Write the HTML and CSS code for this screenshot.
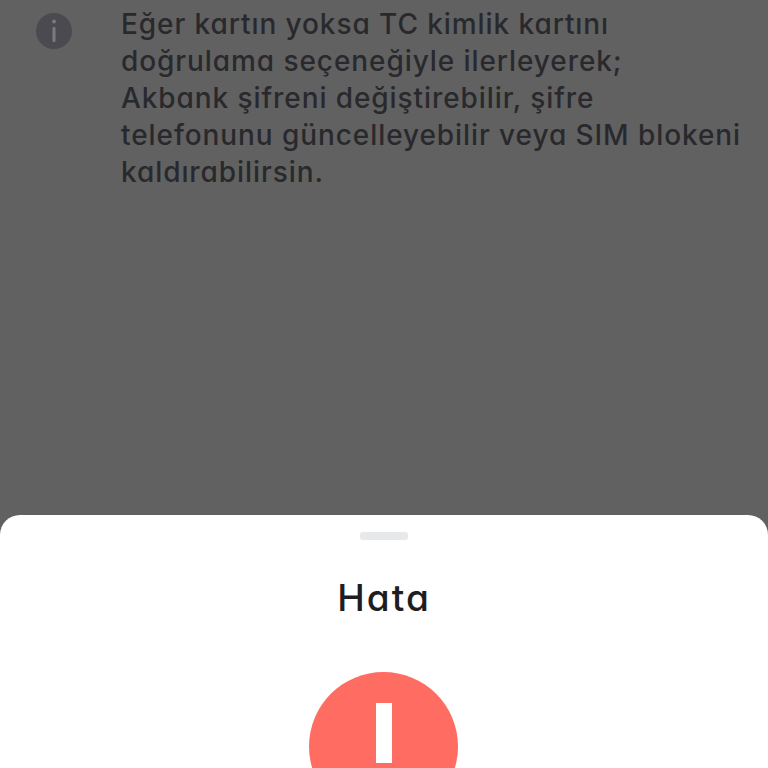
FILE: index.html
```html
<!DOCTYPE html>
<html lang="tr">
<head>
<meta charset="utf-8">
<title>Hata</title>
<link rel="stylesheet" href="styles.css">
</head>
<body>
<div class="screen">
  <main class="backdrop">
    <section class="notice">
      <svg class="info-icon" viewBox="0 0 36 36" aria-hidden="true">
        <circle cx="18" cy="18" r="18" fill="#4a4a50"/>
        <circle cx="18" cy="8.5" r="1.9" fill="#7b7b7f"/>
        <rect x="16.5" y="14" width="3" height="15" rx="1" fill="#7b7b7f"/>
      </svg>
      <p class="notice-text">Eğer kartın yoksa TC kimlik kartını<br>doğrulama seçeneğiyle ilerleyerek;<br>Akbank şifreni değiştirebilir, şifre<br>telefonunu güncelleyebilir veya SIM blokeni<br>kaldırabilirsin.</p>
    </section>
  </main>
  <aside class="sheet">
    <div class="handle"></div>
    <h1 class="sheet-title">Hata</h1>
    <div class="error-badge"><span class="error-bar"></span></div>
  </aside>
</div>
</body>
</html>
```
FILE: styles.css
```css
* { box-sizing: border-box; }
html, body { margin: 0; padding: 0; }
body { width: 768px; height: 768px; overflow: hidden; background: #616161; font-family: "Inter", "Liberation Sans", sans-serif; font-feature-settings: "cv11" 1; }
.screen { display: flex; flex-direction: column; height: 768px; overflow: hidden; }
.backdrop { height: 515px; flex: none; background: #616161; padding: 13px 0 0 36px; }
.notice { display: flex; align-items: flex-start; gap: 49px; }
.info-icon { width: 36px; height: 36px; flex: none; }
.notice-text { margin: -7px 0 0; font-size: 28px; font-weight: 450; line-height: 37px; letter-spacing: 0.92px; color: #29292d; white-space: nowrap; }
.sheet { flex: 1; min-height: 0; background: #fff; border-radius: 20px 20px 0 0; display: flex; flex-direction: column; align-items: center; padding-top: 17px; }
.handle { width: 48px; height: 8px; flex: none; border-radius: 3px; background: #e6e8ea; }
.sheet-title { margin: 35px 0 0; font-size: 37px; line-height: 46px; font-weight: 500; letter-spacing: 2px; color: #1e1e20; flex: none; }
.error-badge { margin: 51px 1px 0 0; width: 149px; height: 149px; flex: none; border-radius: 50%; background: #ff6d62; display: flex; justify-content: center; padding-top: 31px; }
.error-bar { width: 16px; height: 60px; background: #fff; }
```
